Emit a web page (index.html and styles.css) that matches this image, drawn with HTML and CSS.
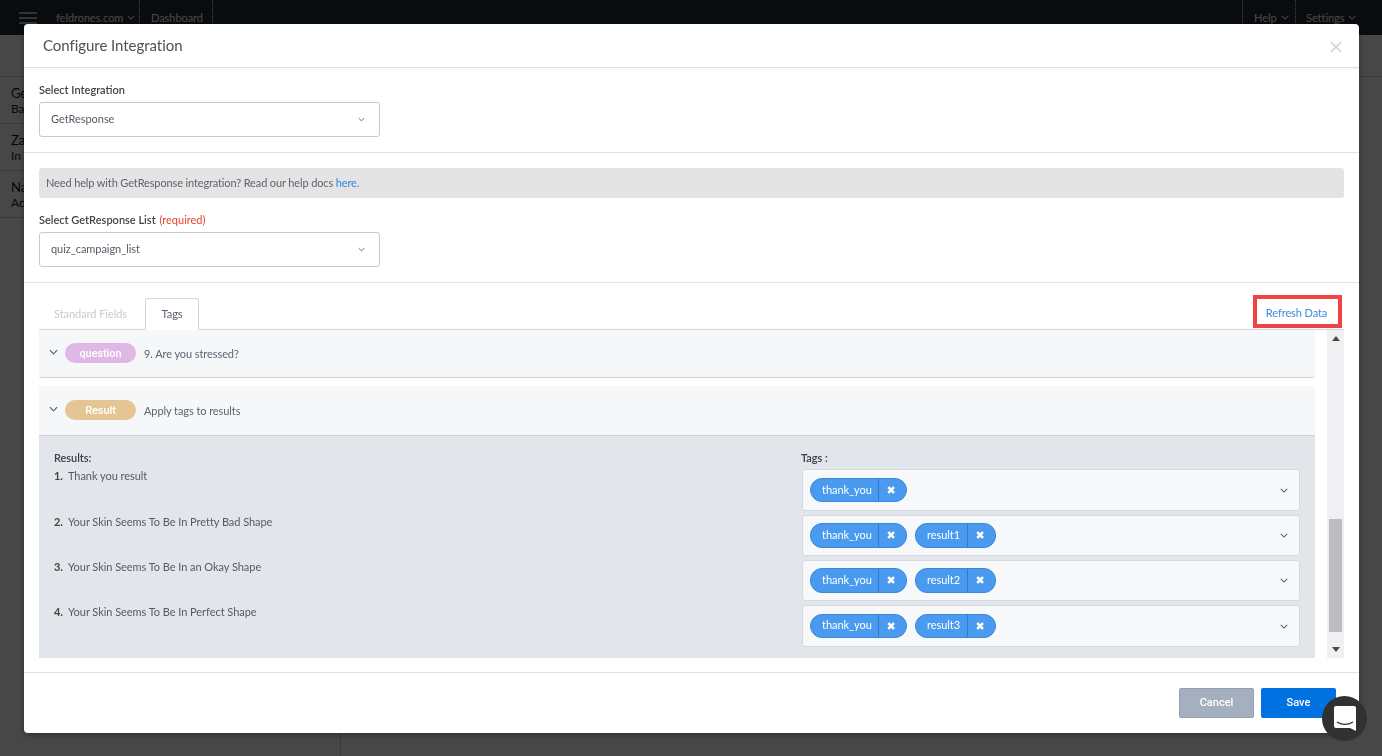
FILE: index.html
```html
<!DOCTYPE html>
<html>
<head>
	<title>Configure Integration</title>
	<meta charset="utf-8">
	<link rel="stylesheet" href="styles.css">
</head>
<body>
  <header class="topbar">
    <div class="logo"><span></span><span></span><span></span></div>
    <div class="top-item site">feldrones.com <svg class="chev" viewBox="0 0 10 6"><path d="M1 1l4 4 4-4"/></svg></div>
    <div class="top-item dash">Dashboard</div>
    <div class="top-spacer"></div>
    <div class="top-item help">Help <svg class="chev" viewBox="0 0 10 6"><path d="M1 1l4 4 4-4"/></svg></div>
    <div class="top-item settings">Settings <svg class="chev" viewBox="0 0 10 6"><path d="M1 1l4 4 4-4"/></svg></div>
  </header>
  <div class="page-head"></div>
  <aside class="sidebar">
    <div class="side-row"><b>Ge</b><span>Ba</span></div>
    <div class="side-row"><b>Za</b><span>In</span></div>
    <div class="side-row"><b>Na</b><span>Ac</span></div>
  </aside>

  <div class="scrim"></div>

  <div class="modal">
    <div class="modal-head">
      <h1>Configure Integration</h1>
      <svg class="close" viewBox="0 0 12 12"><path d="M1 1l10 10M11 1L1 11"/></svg>
    </div>

    <section class="block first">
      <label class="field-label">Select Integration</label>
      <div class="select"><span>GetResponse</span><svg class="chev" viewBox="0 0 10 6"><path d="M1 1l4 4 4-4"/></svg></div>
    </section>

    <section class="block second">
      <div class="notice">Need help with GetResponse integration? Read our help docs <a href="#">here.</a></div>
      <label class="field-label">Select GetResponse List <em>(required)</em></label>
      <div class="select"><span>quiz_campaign_list</span><svg class="chev" viewBox="0 0 10 6"><path d="M1 1l4 4 4-4"/></svg></div>
    </section>

    <div class="tabs">
      <div class="tab">Standard Fields</div>
      <div class="tab active">Tags</div>
      <a class="refresh" href="#">Refresh Data</a>
    </div>

    <div class="scroll">
      <div class="scroll-content">
        <div class="acc-row">
          <svg class="chev acc-chev" viewBox="0 0 10 6"><path d="M1 1l4 4 4-4"/></svg>
          <span class="pill purple">question</span>
          <span>9. Are you stressed?</span>
        </div>
        <div class="acc-row open">
          <svg class="chev acc-chev" viewBox="0 0 10 6"><path d="M1 1l4 4 4-4"/></svg>
          <span class="pill tan">Result</span>
          <span>Apply tags to results</span>
        </div>
        <div class="acc-panel">
          <div class="panel-head"><b>Results:</b><b>Tags :</b></div>
          <div class="result-row tall">
            <div class="result-name"><b>1.</b>Thank you result</div>
            <div class="tag-select">
              <span class="chip"><span>thank_you</span><i>&#10006;</i></span>
              <svg class="chev" viewBox="0 0 10 6"><path d="M1 1l4 4 4-4"/></svg>
            </div>
          </div>
          <div class="result-row">
            <div class="result-name"><b>2.</b>Your Skin Seems To Be In Pretty Bad Shape</div>
            <div class="tag-select">
              <span class="chip"><span>thank_you</span><i>&#10006;</i></span>
              <span class="chip short"><span>result1</span><i>&#10006;</i></span>
              <svg class="chev" viewBox="0 0 10 6"><path d="M1 1l4 4 4-4"/></svg>
            </div>
          </div>
          <div class="result-row">
            <div class="result-name"><b>3.</b>Your Skin Seems To Be In an Okay Shape</div>
            <div class="tag-select">
              <span class="chip"><span>thank_you</span><i>&#10006;</i></span>
              <span class="chip short"><span>result2</span><i>&#10006;</i></span>
              <svg class="chev" viewBox="0 0 10 6"><path d="M1 1l4 4 4-4"/></svg>
            </div>
          </div>
          <div class="result-row tall">
            <div class="result-name"><b>4.</b>Your Skin Seems To Be In Perfect Shape</div>
            <div class="tag-select">
              <span class="chip"><span>thank_you</span><i>&#10006;</i></span>
              <span class="chip short"><span>result3</span><i>&#10006;</i></span>
              <svg class="chev" viewBox="0 0 10 6"><path d="M1 1l4 4 4-4"/></svg>
            </div>
          </div>
        </div>
      </div>
      <div class="scrollbar">
        <div class="arrow up"></div>
        <div class="track"><div class="thumb"></div></div>
        <div class="arrow down"></div>
      </div>
    </div>

    <div class="modal-foot">
      <button class="btn cancel">Cancel</button>
      <button class="btn save">Save</button>
    </div>
  </div>

  <div class="chat">
    <svg viewBox="0 0 22 25"><path d="M2 0h18a2 2 0 0 1 2 2v23l-6-3H2a2 2 0 0 1-2-2V2a2 2 0 0 1 2-2z" fill="#fff"/><path d="M3 16c5 3 11 3 16 0" fill="none" stroke="#2f3133" stroke-width="1.4"/></svg>
  </div>
</body>
</html>
```

FILE: styles.css
```css
* {
	box-sizing: border-box;
}
html, body {
	margin: 0;
	height: 100%;
	overflow: hidden;
}
body {
	background: #fff;
	font-family: "Lato", "Liberation Sans", sans-serif;
	font-size: 11px;
	letter-spacing: -.05px;
	color: #555b66;
}
.chev {
	width: 8px;
	height: 5px;
	flex: none;
	fill: none;
	stroke: #5a6270;
	stroke-width: 1.3;
}

/* page behind the dialog */
.topbar {
	display: flex;
	align-items: center;
	height: 35px;
	background: #1f2c38;
	color: #fff;
	font-size: 11px;
}
.topbar .chev {
	stroke: #fff;
	margin-left: 2px;
}
.logo {
	display: flex;
	flex-direction: column;
	gap: 3px;
	width: 18px;
	margin: 0 19px;
}
.logo span {
	height: 2px;
	background: #b5b5b5;
}
.top-item {
	display: flex;
	align-items: center;
	gap: 2px;
	height: 35px;
	padding-bottom: 1px;
}
.site {
	width: 83px;
}
.dash {
	width: 74px;
	padding-left: 11px;
	border-left: 1px dotted #fff;
	border-right: 1px dotted #fff;
}
.top-spacer {
	flex: 1;
}
.help {
	width: 53px;
	padding-left: 11px;
	border-left: 1px dotted #fff;
}
.settings {
	width: 87px;
	padding-left: 10px;
	border-left: 1px dotted #fff;
}
.page-head {
	height: 42px;
	border-bottom: 1px solid #ccc;
}
.sidebar {
	width: 341px;
	height: 679px;
	border-right: 1px solid #d0d0d0;
}
.side-row {
	display: flex;
	flex-direction: column;
	height: 47px;
	padding: 8px 0 0 11px;
	border-bottom: 1px solid #ccc;
	color: #222;
	font-size: 12px;
	line-height: 16px;
}
.side-row b {
	font-size: 13px;
	font-weight: 400;
	color: #111;
}
.scrim {
	position: fixed;
	top: 0;
	right: 0;
	bottom: 0;
	left: 0;
	background: rgba(0, 0, 0, .72);
}

/* dialog */
.modal {
	position: fixed;
	top: 24px;
	left: 24px;
	width: 1335px;
	height: 709px;
	display: flex;
	flex-direction: column;
	background: #fff;
	border-radius: 4px;
	box-shadow: 0 2px 7px rgba(0, 0, 0, .35);
}
.modal-head {
	display: flex;
	align-items: center;
	justify-content: space-between;
	height: 44px;
	padding: 0 17px 2px 19px;
	border-bottom: 1px solid #dcdfe4;
	box-shadow: 0 1px 2px rgba(0, 0, 0, .05);
}
.modal-head h1 {
	margin: 0;
	font-size: 15px;
	font-weight: 400;
	color: #4b525c;
}
.close {
	width: 12px;
	height: 12px;
	margin-top: 5px;
	fill: none;
	stroke: #cfd5db;
	stroke-width: 1.7;
}
.block {
	padding: 0 15px;
	border-bottom: 1px solid #dfe2e8;
}
.block.first {
	height: 85px;
	padding-top: 15px;
}
.block.second {
	height: 130px;
	padding-top: 15px;
}
.field-label {
	display: block;
	height: 19px;
	line-height: 14px;
	font-size: 11px;
	font-weight: 600;
	letter-spacing: 0;
	color: #444;
}
.field-label em {
	margin-left: 1px;
	font-style: normal;
	font-weight: 400;
	color: #e8432e;
}
.select {
	display: flex;
	align-items: center;
	justify-content: space-between;
	width: 341px;
	height: 35px;
	padding: 0 14px 2px 11px;
	border: 1px solid #c6c9ce;
	border-radius: 3px;
	color: #555b66;
}
.select .chev {
	width: 7px;
	height: 5px;
	margin-top: 2px;
}
.notice {
	height: 30px;
	margin-bottom: 15px;
	padding-left: 7px;
	line-height: 30px;
	letter-spacing: -.13px;
	background: #e4e4e4;
	border-radius: 3px;
	color: #5c6470;
}
.notice a {
	color: #2f86dd;
	text-decoration: none;
}

/* tabs */
.tabs {
	display: flex;
	align-items: flex-end;
	height: 47px;
	margin: 0 15px;
	border-bottom: 1px solid #cfd6e0;
	position: relative;
}
.tab {
	display: flex;
	align-items: center;
	justify-content: center;
	height: 32px;
	margin: 0 3px -1px 0;
	padding: 0 15px 2px;
	color: #c6cbd2;
}
.tab.active {
	width: 54px;
	padding: 0 0 2px;
	background: #fff;
	border: 1px solid #cfd6e0;
	border-bottom-color: #fff;
	border-radius: 3px 3px 0 0;
	color: #59606b;
}
.refresh {
	position: absolute;
	top: 12px;
	right: 2px;
	width: 89px;
	height: 33px;
	padding-right: 2px;
	line-height: 27px;
	letter-spacing: -.1px;
	text-align: center;
	border: 4px solid #ef4444;
	color: #3d8ae0;
	text-decoration: none;
}

/* scrolling list */
.scroll {
	display: flex;
	justify-content: space-between;
	height: 328px;
	margin: 0 15px;
	overflow: hidden;
}
.scroll-content {
	width: 1276px;
}
.acc-row {
	display: flex;
	align-items: center;
	height: 48px;
	padding: 0 0 0 10px;
	background: #f6f7f9;
	border-bottom: 1px solid #cfd1d4;
	border-radius: 0 0 3px 3px;
	color: #5c6470;
	letter-spacing: -.08px;
}
.acc-row.open {
	height: 50px;
	margin-top: 8px;
	border-radius: 3px 3px 0 0;
}
.acc-chev {
	width: 9px;
	height: 6px;
	margin-top: -3px;
}
.pill {
	width: 71px;
	height: 20px;
	margin: 0 8px 1px 7px;
	line-height: 22px;
	text-align: center;
	border-radius: 10px;
	color: #fff;
	font-family: "Roboto", sans-serif;
	font-weight: 500;
}
.purple {
	background: #dfb8e6;
}
.tan {
	background: #e6c595;
}
.acc-panel {
	height: 222px;
	padding: 15px 15px 0 15px;
	background: #e2e5ea;
}
.panel-head {
	display: grid;
	grid-template-columns: 747px 1fr;
	height: 18px;
	line-height: 14px;
	color: #3a3f46;
}
.panel-head b {
	font-weight: 600;
}
.result-row {
	display: grid;
	grid-template-columns: 748px 498px;
	height: 41px;
	margin-bottom: 4px;
}
.result-row.tall {
	height: 42px;
}
.result-name {
	line-height: 14px;
}
.result-name b {
	display: inline-block;
	width: 14px;
	font-weight: 700;
	color: #444;
}
.tag-select {
	display: flex;
	align-items: center;
	gap: 8px;
	padding: 0 11px 0 7px;
	background: #f6f8fa;
	border: 1px solid #d5dae1;
	border-radius: 3px;
}
.tag-select .chev {
	margin-left: auto;
}
.chip {
	display: flex;
	align-items: center;
	height: 24px;
	background: #4a9bf0;
	border: 1px solid #3b87d8;
	border-radius: 12px;
	color: #fff;
}
.result-row:not(.tall) .chip {
	height: 25px;
}
.chip span {
	display: block;
	width: 68px;
	height: 100%;
	padding-left: 11px;
	line-height: 22px;
	border-right: 1px solid #2f7cc9;
}
.result-row + .result-row .chip span {
	line-height: 21px;
}
.result-row:last-child .chip span {
	line-height: 20px;
}
.chip.short span {
	width: 52px;
}
.chip i {
	width: 27px;
	padding-right: 3px;
	text-align: center;
	font-size: 11px;
	font-style: normal;
	font-family: "DejaVu Sans", sans-serif;
}
.scrollbar {
	display: flex;
	flex-direction: column;
	width: 17px;
	background: #f0f0f2;
}
.arrow {
	width: 0;
	height: 0;
	margin: 6px auto;
	border-left: 4px solid transparent;
	border-right: 4px solid transparent;
}
.arrow.up {
	border-bottom: 5px solid #4a4a4a;
}
.arrow.down {
	border-top: 5px solid #4a4a4a;
}
.track {
	flex: 1;
	display: flex;
	flex-direction: column;
	justify-content: flex-end;
	padding: 0 2px 9px;
}
.thumb {
	height: 113px;
	background: #bcbdc0;
}

/* footer */
.modal-foot {
	display: flex;
	justify-content: flex-end;
	gap: 7px;
	height: 61px;
	margin-top: 14px;
	padding: 15px 23px 0 0;
	border-top: 1px solid #dfe2e8;
}
.btn {
	width: 75px;
	height: 30px;
	padding: 0 0 2px;
	font-family: "Roboto", sans-serif;
	font-size: 11px;
	font-weight: 500;
	color: #fff;
	border-radius: 2px;
	border: 1px solid transparent;
}
.cancel {
	background: #a4afc0;
	border-color: #959fae;
}
.save {
	background: #0071e0;
}
.chat {
	position: fixed;
	left: 1322px;
	top: 696px;
	width: 45px;
	height: 45px;
	display: flex;
	align-items: center;
	justify-content: center;
	background: #2f3133;
	border-radius: 50%;
}
.chat svg {
	width: 22px;
	height: 25px;
}
```
